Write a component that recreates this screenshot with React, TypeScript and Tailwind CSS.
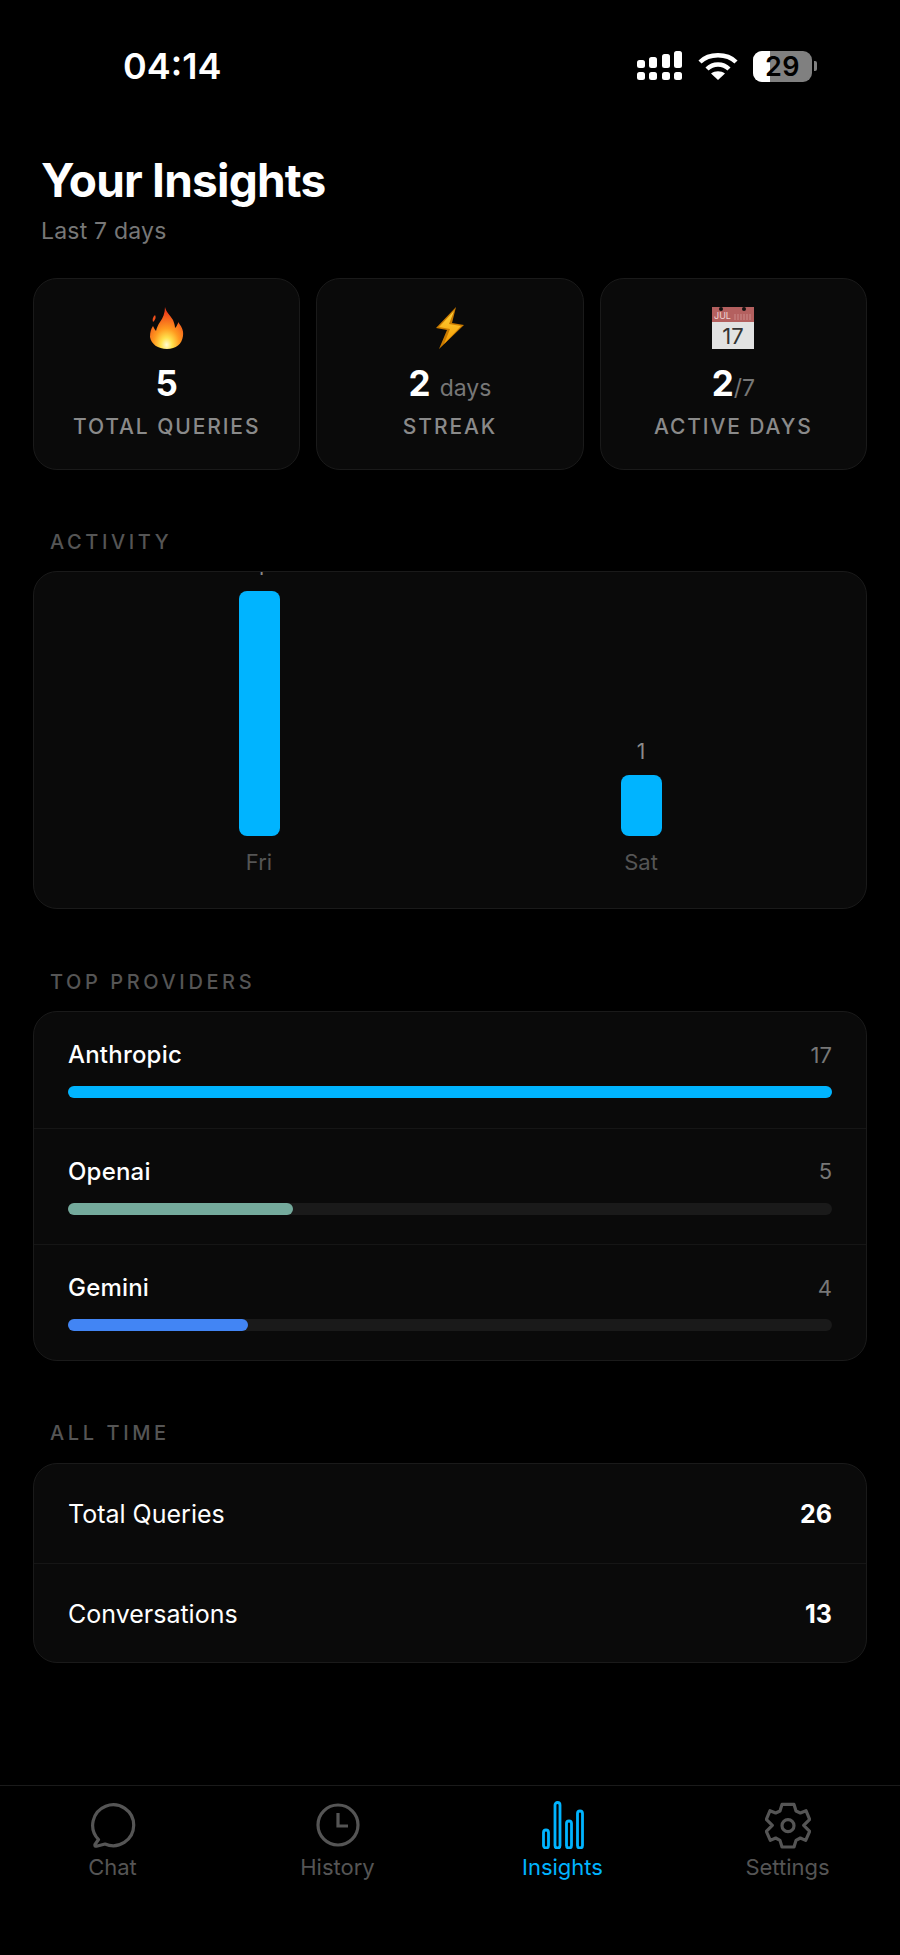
import React from "react";

const font = { fontFamily: "Inter, 'Liberation Sans', sans-serif" };

function Flame() {
  return (
    <svg width="34" height="42" viewBox="0 0 34 42">
      <defs>
        <radialGradient id="fl" cx="50%" cy="90%" r="78%">
          <stop offset="0%" stopColor="#fffbd0" />
          <stop offset="22%" stopColor="#ffe14d" />
          <stop offset="50%" stopColor="#ff9a1f" />
          <stop offset="100%" stopColor="#ee3f1a" />
        </radialGradient>
      </defs>
      <path d="M15 0c1 5 5 8 8 13 1 3 2 5 2 8 1-1 2-2 2-3 1-1 1-2 1-3 3 4 6 8 5 14-1 8-7 13-16 13C8 42 1 37 0 30c0-5 1-8 3-11 1 2 2 4 3 5 1-4 2-6 4-9 3-4 5-9 5-15z" fill="url(#fl)" />
      <path d="M5 8c1 2 1 4-2 7-1-3 0-5 2-7z" fill="#f0501c" />
    </svg>
  );
}

function Bolt() {
  return (
    <svg width="30" height="42" viewBox="0 0 30 42">
      <defs>
        <linearGradient id="bo" x1="0" y1="0" x2="0" y2="1">
          <stop offset="0%" stopColor="#ffd23a" />
          <stop offset="100%" stopColor="#f59a00" />
        </linearGradient>
      </defs>
      <path d="M21 0 1 21l11 2L4 42l25-24-12-2z" fill="#c97a00" />
      <path d="M19 4 4 20l11 2-6 15 17-18-12-2z" fill="url(#bo)" />
    </svg>
  );
}

function Calendar() {
  return (
    <svg width="42" height="42" viewBox="0 0 42 42" style={font}>
      <rect x="0" y="0" width="42" height="42" fill="#e2e2e2" />
      <rect x="0" y="0" width="42" height="15" fill="#b4605f" />
      <circle cx="9" cy="2" r="2" fill="#111" />
      <circle cx="32" cy="2" r="2" fill="#111" />
      <text x="2" y="12" fontSize="9" fill="#f0d4d4">JUL</text>
      <path d="M23 7v6M26 7v6M29 7v6M32 7v6M35 7v6M38 7v6" stroke="#cc8a8a" strokeWidth="1" />
      <text x="21" y="37" fontSize="22" fill="#333" textAnchor="middle">17</text>
    </svg>
  );
}

function StatCard({ icon, value, suffix, label }: { icon: React.ReactNode; value: string; suffix?: React.ReactNode; label: string }) {
  return (
    <div className="flex-1 h-[192px] bg-[#0a0a0a] border border-[#1a1a1a] rounded-[24px] flex flex-col items-center pt-[28px]">
      <div className="h-[42px] flex items-center justify-center">{icon}</div>
      <div className="h-[44px] mt-[12px] flex items-baseline justify-center text-white font-bold text-[35px] leading-[44px]">
        {value}
        {suffix}
      </div>
      <div className="mt-[10px] text-[#8a8a8a] text-[21px] font-medium tracking-[1.9px] leading-[24px] whitespace-nowrap">{label}</div>
    </div>
  );
}

function SectionLabel({ children }: { children: React.ReactNode }) {
  return <div className="pl-[50px] h-[24px] leading-[24px] text-[#555555] text-[20px] font-medium tracking-[3.6px]">{children}</div>;
}

function Provider({ name, count, color, width, last }: { name: string; count: string; color: string; width: string; last?: boolean }) {
  return (
    <div className={"h-[116.5px] px-[34px] pt-[28px] " + (last ? "" : "border-b border-[#161616]")}>
      <div className="flex justify-between items-center h-[30px]">
        <span className="text-white text-[24px] font-medium tracking-[0.2px]">{name}</span>
        <span className="text-[#777777] text-[22px]">{count}</span>
      </div>
      <div className="mt-[16px] h-[12px] rounded-full bg-[#1a1a1a]">
        <div className={"h-full rounded-full " + color + " " + width} />
      </div>
    </div>
  );
}

function Day({ value, label, barClass }: { value: string; label: string; barClass: string }) {
  return (
    <div className="flex-1 flex flex-col items-center justify-end">
      <div className="text-[#8a8a8a] text-[21px] leading-[24px] mb-[11px]">{value}</div>
      <div className={"w-[41px] bg-[#00b4ff] rounded-[8px] " + barClass} />
      <div className="mt-[12px] text-[#555555] text-[22px] leading-[28px]">{label}</div>
    </div>
  );
}

function Tab({ icon, label, active }: { icon: React.ReactNode; label: string; active?: boolean }) {
  return (
    <div className="flex-1 flex flex-col items-center">
      <div className="h-[50px] flex items-center justify-center">{icon}</div>
      <div className={"mt-[4px] text-[22px] leading-[26px] " + (active ? "text-[#00b4ff]" : "text-[#555555]")}>{label}</div>
    </div>
  );
}

export default function App() {
  return (
    <div className="w-[900px] h-[1955px] bg-black flex flex-col overflow-hidden" style={font}>
      {/* status bar */}
      <div className="h-[134px] pl-[123px] pr-[83px] pt-[44px] flex justify-between items-start">
        <div className="text-white text-[36px] font-semibold leading-[44px]">04:14</div>
        <div className="flex items-center gap-[15px] h-[44px]">
          <svg width="46" height="30" viewBox="0 0 46 30" fill="#fff">
            <rect x="0" y="9" width="8" height="8" rx="2.5" />
            <rect x="12" y="6" width="8" height="11" rx="2.5" />
            <rect x="25" y="3" width="8" height="14" rx="2.5" />
            <rect x="37" y="0" width="8" height="17" rx="2.5" />
            <rect x="0" y="21" width="8" height="8" rx="2.5" />
            <rect x="12" y="21" width="8" height="8" rx="2.5" />
            <rect x="25" y="21" width="8" height="8" rx="2.5" />
            <rect x="37" y="21" width="8" height="8" rx="2.5" />
          </svg>
          <svg width="40" height="30" viewBox="0 0 40 30" fill="none" stroke="#fff" strokeWidth="4.4">
            <path d="M2 11C11 2 29 2 38 11" />
            <path d="M9 18c6-6 16-6 22 0" />
            <path d="M20 29l-7-6.500c4-3 10-3 14 0z" fill="#fff" stroke="none" />
          </svg>
          <div className="relative w-[59px] h-[31px] rounded-[9px] bg-[#808080] overflow-hidden flex items-center justify-center">
            <div className="absolute left-0 top-0 bottom-0 w-[17px] bg-white" />
            <span className="relative text-black text-[27px] font-semibold leading-none tracking-[0.5px]">29</span>
          </div>
          <div className="w-[3px] h-[10px] bg-[#808080] rounded-r-[2px] -ml-[13px]" />
        </div>
      </div>

      {/* header */}
      <div className="pl-[41px] h-[144px] pt-[21px]">
        <div className="text-white text-[46px] font-bold leading-[50px] tracking-[-0.8px] h-[50px]">Your Insights</div>
        <div className="text-[#777777] text-[23px] leading-[28px] mt-[12px] tracking-[0.2px]">Last 7 days</div>
      </div>

      {/* stats */}
      <div className="px-[33px] flex gap-[16px]">
        <StatCard icon={<Flame />} value="5" label="TOTAL QUERIES" />
        <StatCard
          icon={<Bolt />}
          value="2"
          suffix={<span className="ml-[9px] text-[23px] font-normal text-[#777777]">days</span>}
          label="STREAK"
        />
        <StatCard
          icon={<Calendar />}
          value="2"
          suffix={<span className="text-[23px] font-normal text-[#777777]">/7</span>}
          label="ACTIVE DAYS"
        />
      </div>

      {/* activity */}
      <div className="mt-[60px]">
        <SectionLabel>ACTIVITY</SectionLabel>
      </div>
      <div className="mx-[33px] mt-[17px] h-[338px] bg-[#0a0a0a] border border-[#1a1a1a] rounded-[24px] overflow-hidden flex items-end px-[34px] pb-[32px]">
        <Day value="4" label="Fri" barClass="h-[245px]" />
        <Day value="1" label="Sat" barClass="h-[61px]" />
      </div>

      {/* providers */}
      <div className="mt-[61px]">
        <SectionLabel>TOP PROVIDERS</SectionLabel>
      </div>
      <div className="mx-[33px] mt-[17px] h-[350px] bg-[#0a0a0a] border border-[#1a1a1a] rounded-[24px] overflow-hidden">
        <Provider name="Anthropic" count="17" color="bg-[#00b4ff]" width="w-full" />
        <Provider name="Openai" count="5" color="bg-[#74aa9c]" width="w-[225px]" />
        <Provider name="Gemini" count="4" color="bg-[#4285f4]" width="w-[180px]" last />
      </div>

      {/* all time */}
      <div className="mt-[60px]">
        <SectionLabel>ALL TIME</SectionLabel>
      </div>
      <div className="mx-[33px] mt-[18px] h-[200px] bg-[#0a0a0a] border border-[#1a1a1a] rounded-[24px] overflow-hidden">
        <div className="h-[100px] px-[34px] pt-[2px] flex justify-between items-center border-b border-[#161616]">
          <span className="text-white text-[25px]">Total Queries</span>
          <span className="text-white text-[25px] font-bold">26</span>
        </div>
        <div className="h-[98px] px-[34px] pt-[3px] flex justify-between items-center">
          <span className="text-white text-[25px]">Conversations</span>
          <span className="text-white text-[25px] font-bold">13</span>
        </div>
      </div>

      {/* tabs */}
      <div className="mt-auto h-[170px] border-t border-[#1a1a1a] flex pt-[14px]">
        <Tab
          label="Chat"
          icon={
            <svg width="46" height="46" viewBox="0 0 46 46" fill="none" stroke="#555555" strokeWidth="3.200" strokeLinejoin="round">
              <path d="M8.500 37.500A20.500 20.500 0 1 1 15 42L6.500 44.200Q4.500 44.500 5 42.500Z" />
            </svg>
          }
        />
        <Tab
          label="History"
          icon={
            <svg width="44" height="44" viewBox="0 0 44 44" fill="none" stroke="#555555" strokeWidth="3.200">
              <circle cx="22" cy="22" r="20" />
              <path d="M22 10v13h10" />
            </svg>
          }
        />
        <Tab
          label="Insights"
          active
          icon={
            <svg width="42" height="48" viewBox="0 0 42 48" fill="none" stroke="#00b4ff" strokeWidth="2.800">
              <rect x="1.500" y="29" width="5" height="18" rx="2.500" />
              <rect x="13" y="1.500" width="5" height="45.500" rx="2.500" />
              <rect x="24.500" y="20" width="5" height="27" rx="2.500" />
              <rect x="35.500" y="10" width="5" height="37" rx="2.500" />
            </svg>
          }
        />
        <Tab
          label="Settings"
          icon={
            <svg width="46" height="47" viewBox="44 35 138 141" fill="none" stroke="#555555" strokeWidth="9.500" strokeLinejoin="round">
              <path d="M95 42H131L137 62L150 68L167 61L178 87L160 105L178 123L166 150L150 143L137 150L131 170H95L89 150L76 143L60 150L48 123L66 105L48 87L59 61L76 68L89 62Z" />
              <circle cx="113" cy="106" r="18" />
            </svg>
          }
        />
      </div>
    </div>
  );
}
